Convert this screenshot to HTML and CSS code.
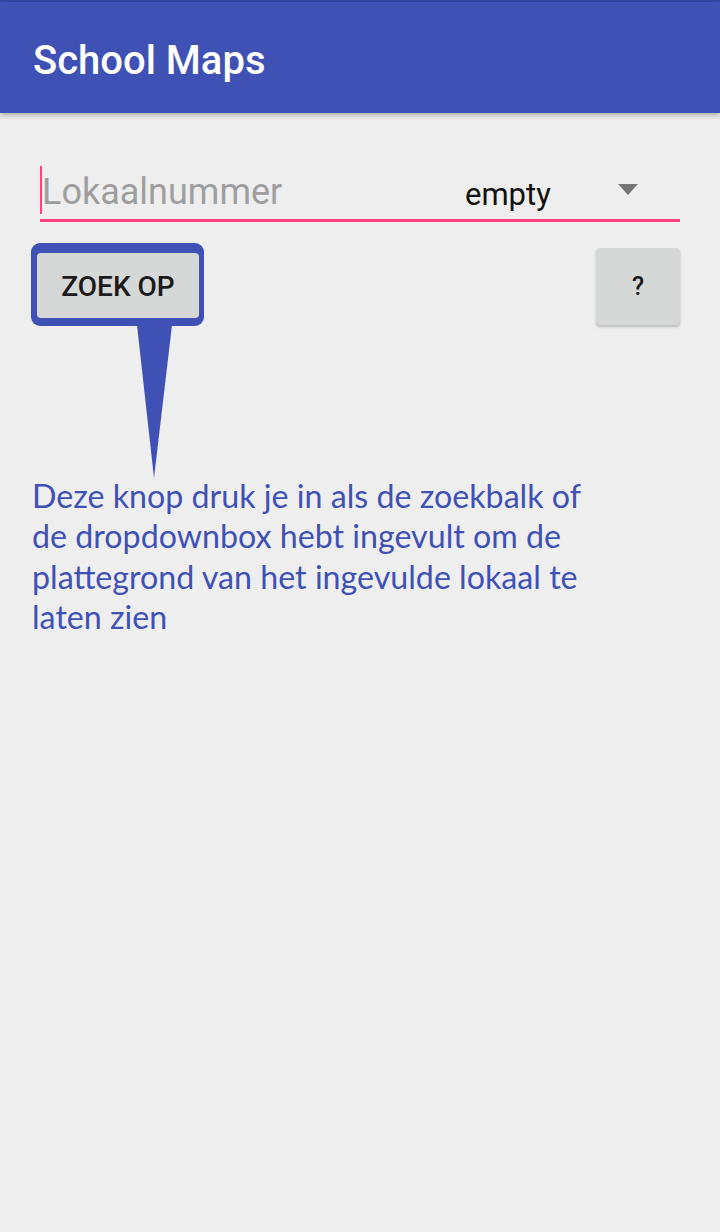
FILE: index.html
```html
<!DOCTYPE html>
<html lang="nl">
<head>
<meta charset="utf-8">
<title>School Maps</title>
<link rel="stylesheet" href="styles.css">
</head>
<body>
<div class="statusbar"></div>
<header class="appbar">
  <h1 class="title">School Maps</h1>
</header>
<main class="content">
  <div class="search-row">
    <div class="field">
      <span class="cursor"></span>
      <span class="placeholder">Lokaalnummer</span>
    </div>
    <div class="spinner">
      <span class="spinner-value">empty</span>
      <svg class="spinner-arrow" width="20" height="11" viewBox="0 0 20 11"><polygon points="0,0 20,0 10,11" fill="#757575"/></svg>
    </div>
  </div>
  <div class="actions">
    <div class="callout">
      <div class="callout-box">
        <button class="btn btn-search">ZOEK OP</button>
      </div>
      <svg class="callout-tail" width="36" height="153" viewBox="0 0 36 153"><polygon points="0,0 35,0 17,153" fill="#3F51B5"/></svg>
    </div>
    <button class="btn btn-help">?</button>
  </div>
  <p class="hint">Deze knop druk je in als de zoekbalk of<br>de dropdownbox hebt ingevult om de<br>plattegrond van het ingevulde lokaal te<br>laten zien</p>
</main>
</body>
</html>
```
FILE: styles.css
```css
html, body {
  margin: 0;
  padding: 0;
}
body {
  width: 720px;
  height: 1232px;
  background: #EEEEEE;
  font-family: Roboto, "Noto Sans", sans-serif;
  overflow: hidden;
}
.statusbar {
  height: 2px;
  background: #3447A6;
}
.appbar {
  height: 111px;
  background: #3F51B5;
  display: flex;
  align-items: center;
  padding-left: 33px;
  box-shadow: 0 2px 5px rgba(0,0,0,0.28);
  position: relative;
}
.title {
  margin: 0;
  color: #FFFFFF;
  font-size: 40px;
  font-weight: 500;
  letter-spacing: 0;
  margin-top: 6px;
}
.content {
  padding-top: 53px;
}
.search-row {
  margin: 0 40px;
  height: 53px;
  border-bottom: 3px solid #FF4081;
  display: flex;
  align-items: flex-end;
}
.field {
  flex: 1;
  display: flex;
  align-items: flex-end;
  height: 100%;
  position: relative;
}
.cursor {
  position: absolute;
  left: 0;
  top: 0;
  width: 2px;
  height: 48px;
  background: #FF4081;
}
.placeholder {
  margin-left: 2px;
  color: #9E9E9E;
  font-size: 36px;
  line-height: 48px;
  padding-bottom: 3px;
}
.spinner {
  width: 215px;
  display: flex;
  align-items: center;
  height: 100%;
}
.spinner-value {
  color: #111111;
  font-size: 31px;
  margin-top: 4px;
}
.spinner-arrow {
  margin-left: 67px;
  margin-top: -6px;
}
.actions {
  display: flex;
  justify-content: space-between;
  align-items: flex-start;
  padding: 21px 40px 0 31px;
}
.callout {
  display: flex;
  flex-direction: column;
}
.callout-box {
  background: #3F51B5;
  border-radius: 9px;
  padding: 10px 5px 8px 6px;
  width: 162px;
}
.btn {
  border: none;
  background: #D6D7D7;
  color: #1A1A1A;
  font-family: Roboto, "Noto Sans", sans-serif;
  font-weight: 500;
  border-radius: 4px;
  padding: 0;
  display: flex;
  align-items: center;
  justify-content: center;
}
.btn-search {
  width: 162px;
  height: 65px;
  font-size: 28px;
  padding-top: 2px;
}
.callout-tail {
  display: block;
  margin-left: 106px;
  margin-top: -1px;
}
.btn-help {
  margin-top: 5px;
  width: 84px;
  height: 77px;
  font-size: 25px;
  box-shadow: 0 2px 3px rgba(0,0,0,0.22);
}
.hint {
  margin: -2px 0 0 32px;
  color: #3F51B5;
  font-family: Lato, "Open Sans", sans-serif;
  font-size: 32.2px;
  line-height: 40.4px;
}
```
